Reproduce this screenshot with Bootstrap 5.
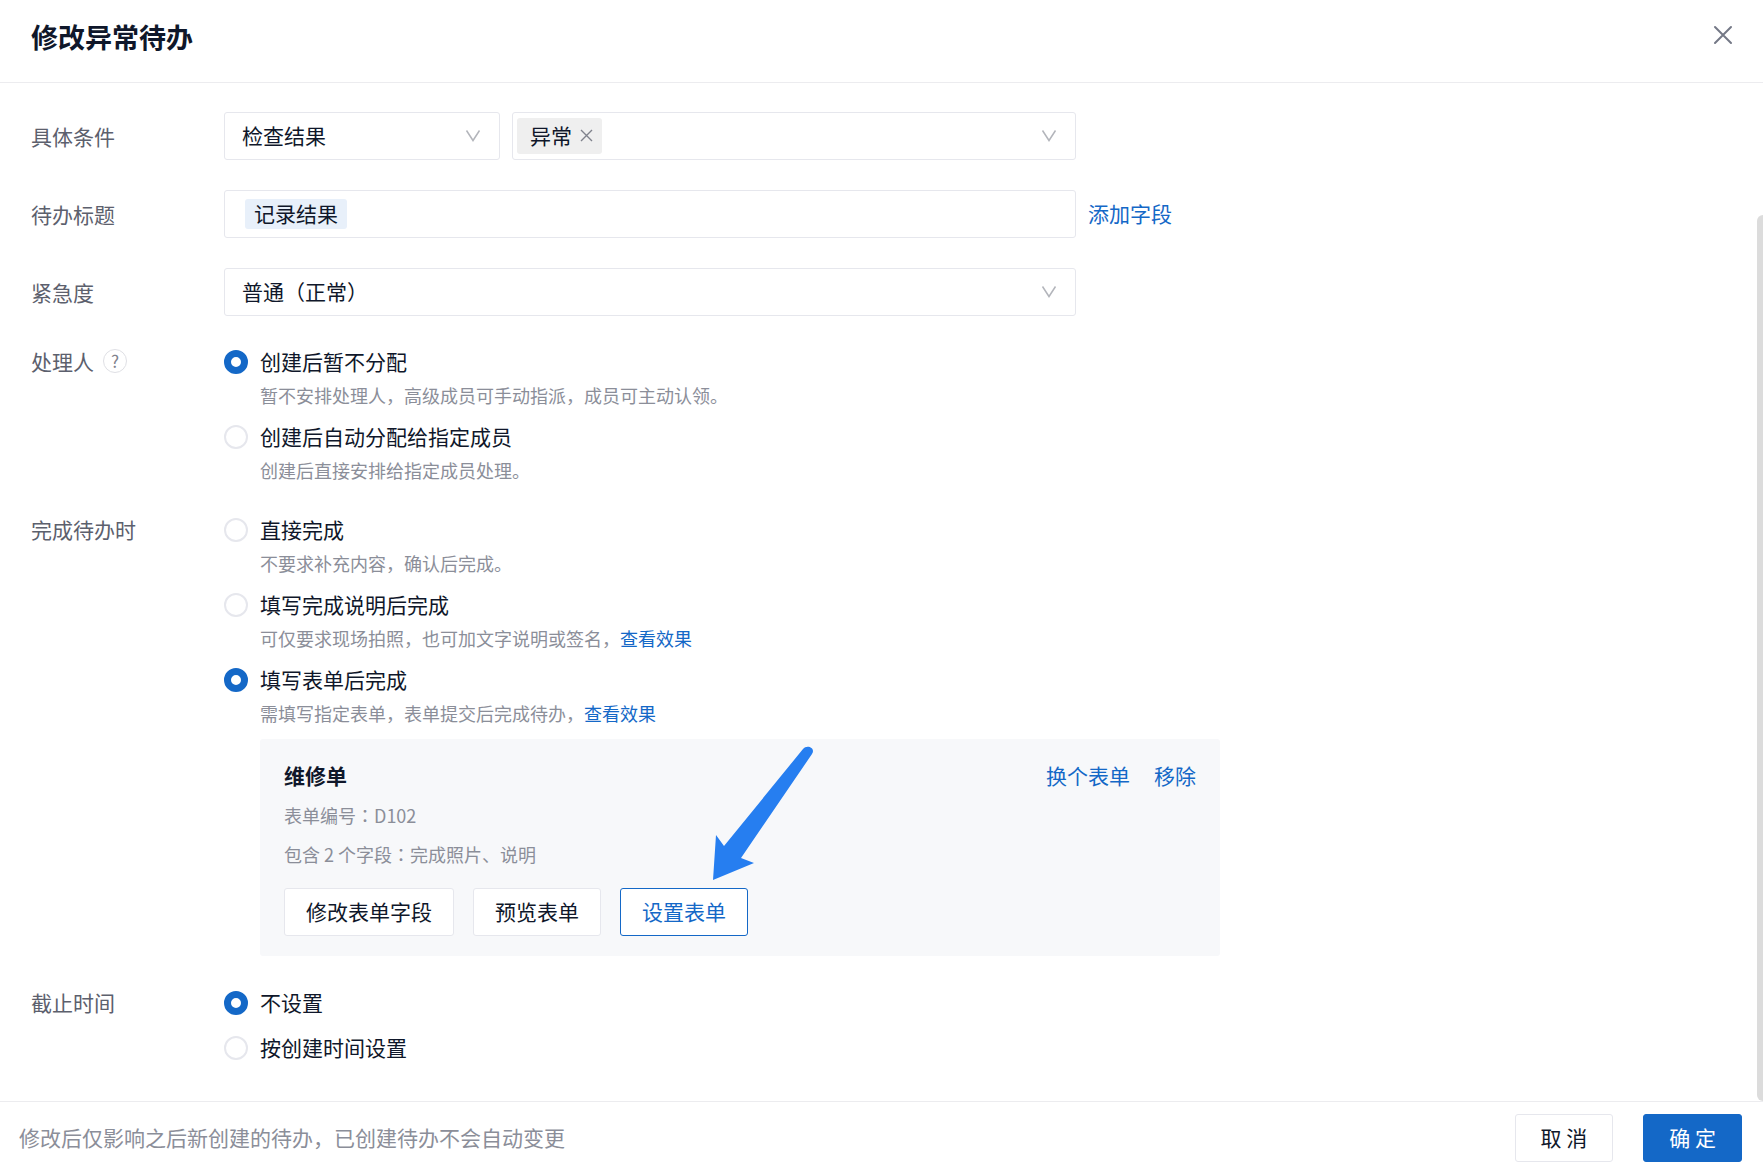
<!DOCTYPE html>
<html lang="zh-CN">
<head>
<meta charset="utf-8">
<meta name="viewport" content="width=device-width, initial-scale=1">
<title>修改异常待办</title>
<link href="https://cdn.jsdelivr.net/npm/bootstrap@5.3.0/dist/css/bootstrap.min.css" rel="stylesheet">
<style>
:root{--ink:#0f172a;--label:#5c606d;--muted:#8b8e99;--brand:#1468c7;--line:#e6e7ed}
body{font-family:"Noto Sans CJK SC",sans-serif;font-size:21px;line-height:32px;color:var(--ink);background:#fff}
a{color:var(--brand);text-decoration:none}
.colon{font-family:"Noto Sans CJK TC",sans-serif}
.dlg-head{padding:17px 22px 25px 31px;border-bottom:1px solid #ececef}
.dlg-title{font-size:27px;line-height:40px;font-weight:700}
.close-x{width:36px;height:36px;color:#747886}
.dlg-body{gap:29px;padding:29px 32px 20px 31px;min-height:0}
.thumb{right:0;bottom:0;width:6px;height:87%;background:#dcdcdc;border-radius:6px 0 0 6px}
.field-name{width:193px;color:var(--label)}
.field-row{height:49px;padding-bottom:1px}
.group-name{line-height:30px}
.wide{max-width:852px}
.box{height:48px;border:1px solid var(--line);border-radius:3px;color:var(--ink);font-size:21px;line-height:32px;background-color:#fff}
.arrowed{background-image:url("data:image/svg+xml,%3Csvg xmlns='http://www.w3.org/2000/svg' viewBox='0 0 16 14'%3E%3Cpath d='M1.5 1.5 8 11.5 14.5 1.5' fill='none' stroke='%23b3b5bb' stroke-width='1.5'/%3E%3C/svg%3E");background-repeat:no-repeat;background-position:right 18px center;background-size:16px 14px}
select.box{padding:0 44px 2px 17px}
.sel-short{width:276px}
.tag-grey{height:36px;padding:0 9px 2px 13px;gap:8px;background:#efefef;border-radius:3px}
.tag-grey button{width:13px;height:16px;color:#7f828c}
.tag-blue{height:30px;line-height:28px;padding:0 9px;background:#e8f0fa;border-radius:3px}
.bare{border:0;outline:0;background:transparent;min-width:0}
.add-link{padding-bottom:2px}
.help{width:24px;height:24px;margin-left:9px;border:1px solid #dfe0e5;color:#7f828c;font-size:17px;line-height:22px}
.opts{gap:11px}
.opts-plain{gap:13px}
.opt{padding-left:36px}
.opt .form-check-input{width:24px;height:24px;margin:4px 0 0 -36px;border:2px solid var(--line);background-image:none}
.opt .form-check-input:checked{border:7px solid var(--brand);background:#fff}
.opt label{display:block;line-height:30px;padding-bottom:2px}
.desc{font-size:18px;line-height:26px;padding-bottom:2px;color:var(--muted)}
.sheet{max-width:960px;padding:20px 24px;margin-bottom:2px;background:#f7f8fa;border-radius:3px}
.sheet-info{gap:11px;padding-top:11px}
.sheet-btns{gap:19px;padding-top:19px}
.btn-box{height:48px;padding:0 21px 2px;border:1px solid var(--line);border-radius:3px;background:#fff;color:var(--ink);font-size:21px;line-height:32px}
.btn-box.on{border-color:var(--brand);color:var(--brand)}
.btn-box.solid{border-color:var(--brand);background:var(--brand);color:#fff}
.pointer{left:452px;top:7px;width:104px;height:136px;pointer-events:none}
.dlg-foot{padding:12px 21px 11px 19px;border-top:1px solid #ececef}
.dlg-foot .btn-box{padding:0 25px 2px}
.foot-note{color:var(--muted);padding-bottom:3px}
.foot-btns{gap:30px}
</style>
<script src="https://cdn.jsdelivr.net/npm/bootstrap@5.3.0/dist/js/bootstrap.bundle.min.js"></script>
</head>
<body>
<div class="d-flex flex-column vh-100">
  <header class="dlg-head d-flex align-items-start justify-content-between flex-shrink-0">
    <h1 class="dlg-title m-0">修改异常待办</h1>
    <button type="button" class="close-x btn p-0 border-0 d-flex align-items-center justify-content-center" aria-label="关闭">
      <svg width="20" height="20" viewBox="0 0 20 20" fill="none" stroke="currentColor" stroke-width="2" stroke-linecap="round"><path d="M2 2 18 18M18 2 2 18"/></svg>
    </button>
  </header>

  <main class="position-relative flex-grow-1 d-flex flex-column overflow-hidden">
    <form class="dlg-body d-flex flex-column flex-grow-1 overflow-auto">
      <div class="field-row d-flex align-items-center flex-shrink-0">
        <label class="field-name flex-shrink-0" for="cond">具体条件</label>
        <div class="wide d-flex flex-grow-1 gap-2">
          <select id="cond" class="sel-short form-select box arrowed flex-shrink-0 me-1"><option>检查结果</option></select>
          <div class="box arrowed d-flex align-items-center flex-grow-1 px-1">
            <span class="tag-grey d-flex align-items-center">异常
              <button type="button" class="btn p-0 border-0 d-flex align-items-center" aria-label="移除异常"><svg width="13" height="13" viewBox="0 0 13 13" fill="none" stroke="currentColor" stroke-width="1.4"><path d="M1 1 12 12M12 1 1 12"/></svg></button>
            </span>
            <input class="bare flex-grow-1" type="text" aria-label="条件取值">
          </div>
        </div>
      </div>

      <div class="field-row d-flex align-items-center flex-shrink-0">
        <label class="field-name flex-shrink-0" for="ttl">待办标题</label>
        <div class="wide box d-flex align-items-center flex-grow-1 px-3">
          <span class="tag-blue ms-1">记录结果</span>
          <input id="ttl" class="bare flex-grow-1" type="text">
        </div>
        <a href="#" class="add-link ms-2 ps-1 flex-shrink-0">添加字段</a>
      </div>

      <div class="field-row d-flex align-items-center flex-shrink-0">
        <label class="field-name flex-shrink-0" for="urg">紧急度</label>
        <select id="urg" class="wide form-select box arrowed"><option>普通（正常）</option></select>
      </div>

      <div class="d-flex align-items-start" role="radiogroup" aria-labelledby="g1">
        <div class="field-name d-flex align-items-center flex-shrink-0"><span id="g1" class="group-name">处理人</span><button type="button" class="help rounded-circle bg-white p-0 text-center" aria-label="帮助">?</button></div>
        <div class="opts d-flex flex-column flex-grow-1">
          <div class="opt"><input class="form-check-input float-start" type="radio" name="who" id="w1" checked><label for="w1">创建后暂不分配</label><div class="desc mt-1">暂不安排处理人，高级成员可手动指派，成员可主动认领。</div></div>
          <div class="opt"><input class="form-check-input float-start" type="radio" name="who" id="w2"><label for="w2">创建后自动分配给指定成员</label><div class="desc mt-1">创建后直接安排给指定成员处理。</div></div>
        </div>
      </div>

      <div class="d-flex align-items-start" role="radiogroup" aria-labelledby="g2">
        <div id="g2" class="field-name group-name flex-shrink-0">完成待办时</div>
        <div class="opts d-flex flex-column flex-grow-1">
          <div class="opt"><input class="form-check-input float-start" type="radio" name="done" id="d1"><label for="d1">直接完成</label><div class="desc mt-1">不要求补充内容，确认后完成。</div></div>
          <div class="opt"><input class="form-check-input float-start" type="radio" name="done" id="d2"><label for="d2">填写完成说明后完成</label><div class="desc mt-1">可仅要求现场拍照，也可加文字说明或签名，<a href="#">查看效果</a></div></div>
          <div class="opt"><input class="form-check-input float-start" type="radio" name="done" id="d3" checked><label for="d3">填写表单后完成</label><div class="desc mt-1">需填写指定表单，表单提交后完成待办，<a href="#">查看效果</a></div></div>
          <div class="opt">
            <section class="sheet position-relative">
              <div class="d-flex justify-content-between">
                <strong>维修单</strong>
                <div class="d-flex gap-4"><a href="#">换个表单</a><a href="#">移除</a></div>
              </div>
              <div class="sheet-info d-flex flex-column">
                <div class="desc">表单编号<span class="colon" lang="zh-TW">：</span>D102</div>
                <div class="desc">包含 2 个字段<span class="colon" lang="zh-TW">：</span>完成照片、说明</div>
              </div>
              <div class="sheet-btns d-flex flex-wrap">
                <button type="button" class="btn-box">修改表单字段</button>
                <button type="button" class="btn-box">预览表单</button>
                <button type="button" class="btn-box on">设置表单</button>
              </div>
              <svg class="pointer position-absolute" viewBox="0 0 104 136" fill="#267ef0" aria-hidden="true"><path d="M1 134 4 89 12 100 91 3C95-2 104 2 100 8L29 112 42 117Z"/></svg>
            </section>
          </div>
        </div>
      </div>

      <div class="d-flex align-items-start" role="radiogroup" aria-labelledby="g3">
        <div id="g3" class="field-name group-name flex-shrink-0">截止时间</div>
        <div class="opts-plain d-flex flex-column flex-grow-1">
          <div class="opt"><input class="form-check-input float-start" type="radio" name="due" id="t1" checked><label for="t1">不设置</label></div>
          <div class="opt"><input class="form-check-input float-start" type="radio" name="due" id="t2"><label for="t2">按创建时间设置</label></div>
        </div>
      </div>
    </form>
    <div class="thumb position-absolute"></div>
  </main>

  <footer class="dlg-foot d-flex align-items-center justify-content-between flex-shrink-0">
    <span class="foot-note">修改后仅影响之后新创建的待办，已创建待办不会自动变更</span>
    <div class="foot-btns d-flex">
      <button type="button" class="btn-box">取 消</button>
      <button type="button" class="btn-box solid">确 定</button>
    </div>
  </footer>
</div>
</body>
</html>
